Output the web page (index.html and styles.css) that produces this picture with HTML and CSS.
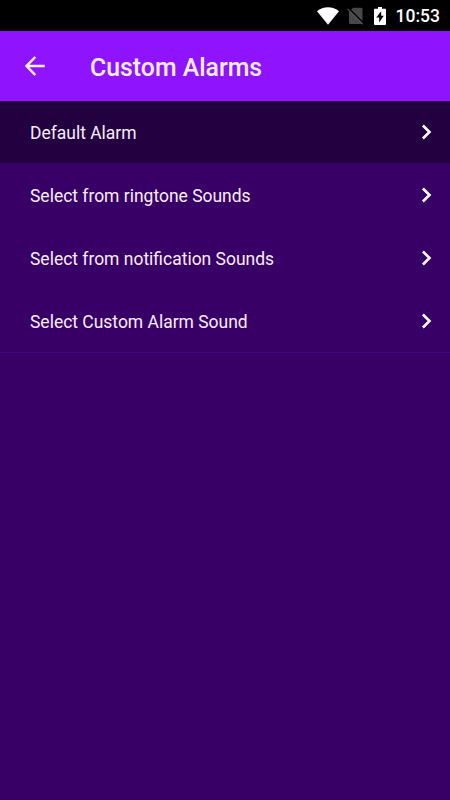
FILE: index.html
```html
<!DOCTYPE html>
<html lang="en">
<head>
<meta charset="utf-8">
<title>Custom Alarms</title>
<link rel="stylesheet" href="styles.css">
</head>
<body>
<div class="status">
  <svg class="wifi" width="22" height="18" viewBox="0 0 22 18"><path d="M0 4.300C3 1.700 7 .2 11 .2s8 1.500 11 4.100L11 17.800z" fill="#fff"/></svg>
  <svg class="sim" width="17" height="18" viewBox="0 0 17 18"><path d="M6 .8h8q1.500 0 1.500 1.500V17H3.500Q2 17 2 15.500V4.800z" fill="#484848"/><path d="M1.500 1 17 16.500" stroke="#000" stroke-width="1.500"/><path d="M.5 1.900 15.800 17.200" stroke="#505050" stroke-width="1.300"/></svg>
  <svg class="battery" width="12" height="18" viewBox="0 0 12 18"><path d="M4 0h4v1.800h3q1 0 1 1V17q0 1-1 1H1q-1 0-1-1V2.800q0-1 1-1h3z" fill="#fff"/><path d="M7.200 4.200 2.200 10.500h3V15.500l4.600-6.700H7.200z" fill="#000"/></svg>
  <span class="clock">10:53</span>
</div>
<header class="bar">
  <svg class="back" width="20" height="20" viewBox="0 0 20 20"><path d="M19.800 10H1.800M10.300 1 1.600 10l8.700 9" fill="none" stroke="#fbf0ff" stroke-width="2.500"/></svg>
  <h1 class="title">Custom Alarms</h1>
</header>
<ul class="list">
  <li class="row active"><span>Default Alarm</span><svg class="chev" width="10" height="16" viewBox="0 0 10 16"><path d="M.9 1.500 7.500 8l-6.600 6.500" /></svg></li>
  <li class="row"><span>Select from ringtone Sounds</span><svg class="chev" width="10" height="16" viewBox="0 0 10 16"><path d="M.9 1.500 7.500 8l-6.600 6.500" /></svg></li>
  <li class="row"><span>Select from notification Sounds</span><svg class="chev" width="10" height="16" viewBox="0 0 10 16"><path d="M.9 1.500 7.500 8l-6.600 6.500" /></svg></li>
  <li class="row last"><span>Select Custom Alarm Sound</span><svg class="chev" width="10" height="16" viewBox="0 0 10 16"><path d="M.9 1.500 7.500 8l-6.600 6.500" /></svg></li>
</ul>
</body>
</html>
```
FILE: styles.css
```css
* {
  box-sizing: border-box;
}

body {
  margin: 0;
  min-height: 800px;
  background: #380066;
  color: #f8eeff;
  font-family: Roboto, sans-serif;
}

.status {
  display: flex;
  align-items: center;
  justify-content: flex-end;
  height: 31px;
  padding-right: 10px;
  background: #000;
}

.wifi {
  margin-right: 8px;
}

.sim {
  margin-right: 10px;
}

.battery {
  margin-right: 10px;
}

.clock {
  color: #fff;
  font-size: 17.5px;
  font-weight: 500;
  line-height: 31px;
  padding-top: 2px;
}

.bar {
  display: flex;
  align-items: center;
  height: 70px;
  padding-left: 25px;
  background: #9013fe;
}

.title {
  margin: 4px 0 0 45px;
  font-size: 24.85px;
  font-weight: 500;
  line-height: 30px;
}

.list {
  margin: 0;
  padding: 0;
  list-style: none;
}

.row {
  display: flex;
  align-items: center;
  justify-content: space-between;
  height: 63px;
  padding: 1px 18px 0 30px;
  border-bottom: 1px solid #3c006c;
  font-size: 17.48px;
  line-height: 24px;
}

.active {
  background: #230040;
  border-bottom-color: #3a0068;
}

.last {
  border-bottom-color: #45007d;
}

.chev {
  margin-bottom: 1px;
  overflow: visible;
  fill: none;
  stroke: #fff;
  stroke-width: 2.6;
}
```
